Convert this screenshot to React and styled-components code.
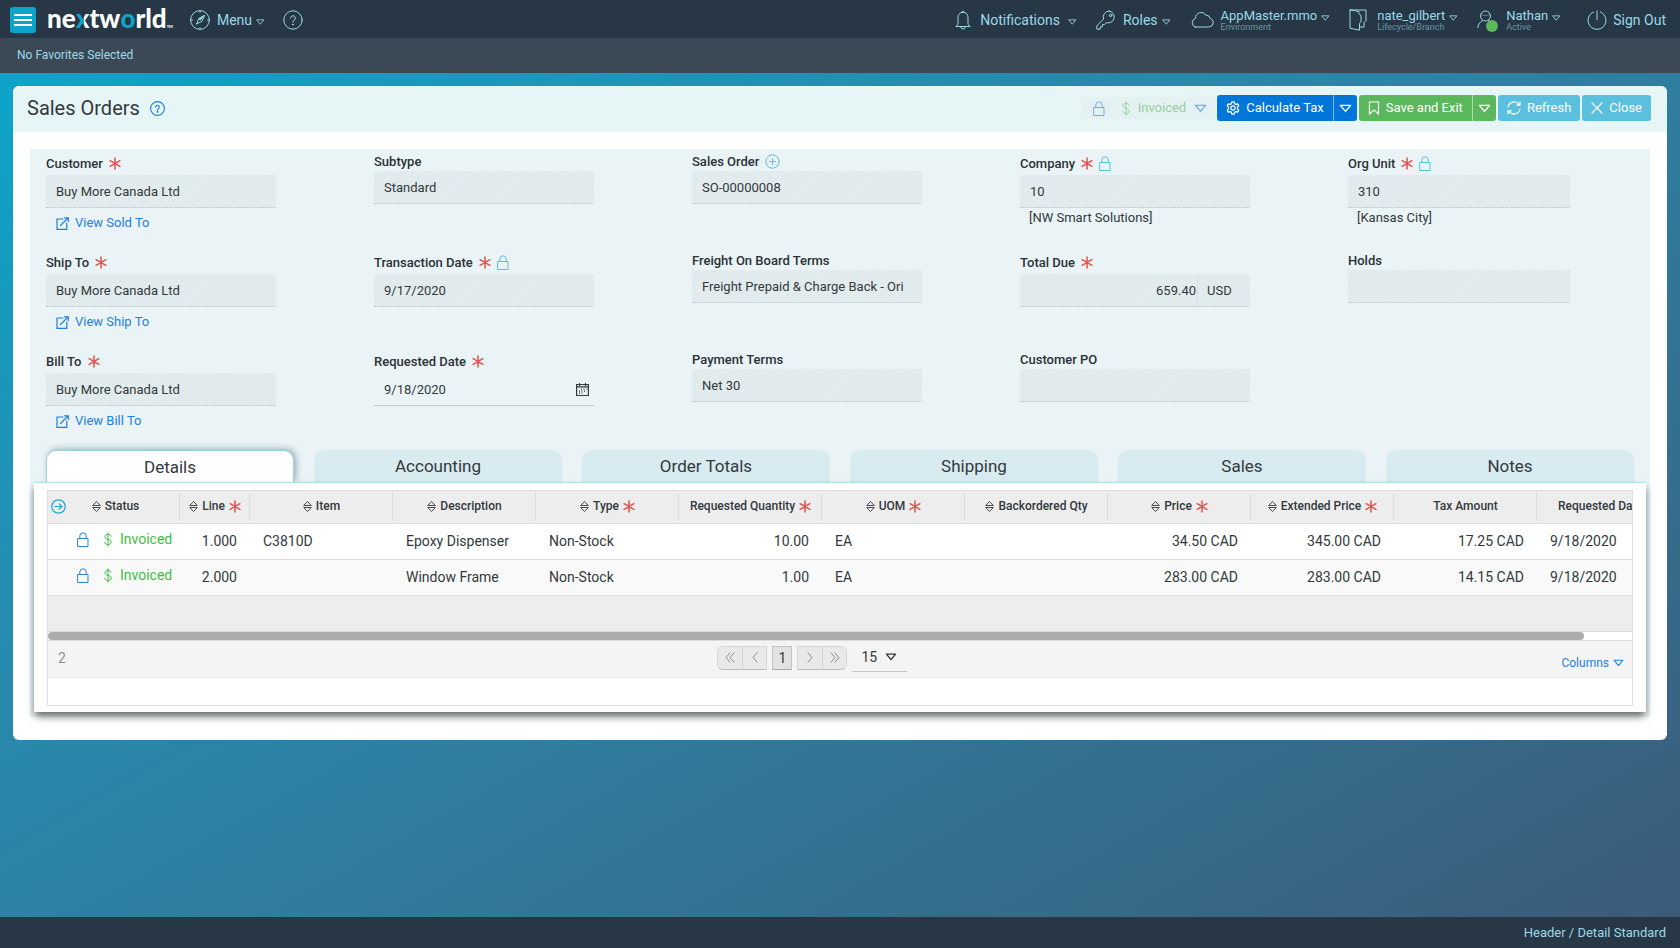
import React from "react";
import styled, { createGlobalStyle, css } from "styled-components";

const GlobalStyle = createGlobalStyle`
  * {
    box-sizing: border-box;
  }

  body {
    margin: 0;
    color: #33393d;
    font-family: Roboto, "Liberation Sans", sans-serif;
    font-size: 13px;
    line-height: 20px;
  }

  button,
  input,
  select {
    margin: 0;
    border: 0;
    border-radius: 0;
    padding: 0;
    background: none;
    color: inherit;
    font: inherit;
  }

  button {
    cursor: pointer;
  }

  a {
    color: inherit;
    text-decoration: none;
  }
`;

/* icons */

const Svg = styled.svg`
  display: block;
  flex: none;
  fill: none;
  stroke: currentColor;
  stroke-linecap: round;
  stroke-linejoin: round;
`;

const Icon = ({ w = 20, h = w, box = `0 0 ${w} ${h}`, stroke = 1, ...props }) => (
  <Svg width={w} height={h} viewBox={box} strokeWidth={stroke} aria-hidden="true" {...props} />
);

const Caret = ({ w = 9, stroke = 1 }) => (
  <Icon w={w} h={Math.round(w * 0.7)} box="0 0 10 7" stroke={stroke}>
    <path d="M1 1h8L5 5.8z" />
  </Icon>
);

const CompassIcon = () => (
  <Icon w={20}>
    <circle cx="10" cy="10" r="9.4" />
    <path d="M14.4 5.4L9 8.2l-2.6 6 5.2-2.8z" />
    <path d="M11 9.4l2.6-3.2L9.4 9z" fill="currentColor" />
    <path d="M10 .8v1.6M10 17.6v1.6M.8 10h1.6M17.6 10h1.6" />
  </Icon>
);

const HelpIcon = ({ w = 20, stroke = 1 }) => (
  <Icon w={w} box="0 0 20 20" stroke={stroke}>
    <circle cx="10" cy="10" r="9.2" />
    <path d="M7.6 8.1a2.4 2.4 0 1 1 3.6 2.1c-.8.4-1.2.8-1.2 1.7v.3" />
    <circle cx="10" cy="14.4" r=".5" fill="currentColor" />
  </Icon>
);

const BellIcon = () => (
  <Icon w={16} h={20}>
    <path d="M8 2.2C4.7 2.2 3 4.6 3 7.6v5.6c0 1.5-.8 2.4-2.2 3.3h14.4c-1.4-.9-2.2-1.8-2.2-3.3V7.6c0-3-1.7-5.4-5-5.4z" />
    <path d="M7 2.2a1 1 0 0 1 2 0M5.7 16.7a2.3 2.3 0 0 0 4.6 0" />
  </Icon>
);

const KeyIcon = () => (
  <Icon w={20} h={20}>
    <path d="M13.2 1a6 6 0 0 0-5.6 8.1L.8 15.9v3.3h3.4v-2.3h2.2v-2.3h2.2l1.7-2A6 6 0 1 0 13.2 1z" />
    <circle cx="14.6" cy="5.4" r="1.3" />
  </Icon>
);

const CloudIcon = () => (
  <Icon w={24} h={16}>
    <path d="M5.2 15h13.6a4.4 4.4 0 0 0 1.2-8.6 3.8 3.8 0 0 0-4-3.2A5.6 5.6 0 0 0 5.6 6.4 4.5 4.5 0 0 0 5.2 15z" />
  </Icon>
);

const MapIcon = () => (
  <Icon w={18} h={22}>
    <path d="M1 1h16v10.5l-2 2V18h-4M1 1v18.2l9.500 2V14.500l1.500-2V7L10 4.500V3z" />
  </Icon>
);

const UserIcon = () => (
  <Icon w={20} h={20}>
    <circle cx="8.5" cy="6" r="5" />
    <path d="M.8 17.6c.3-3.6 2.4-6 4.8-7M11.5 10.6c1.2.5 2 1 2.7 1.9" />
    <path d="M4.500 4.5c2 1.5 5 1.6 8 .3" strokeOpacity=".4" />
  </Icon>
);

const PowerIcon = () => (
  <Icon w={20} h={20}>
    <path d="M6.5 2a9 9 0 1 0 7 0M10 1v8.5" />
  </Icon>
);

const LockIcon = ({ w = 12, stroke = 1 }) => (
  <Icon w={w} h={w + 3} box="0 0 12 15" stroke={stroke}>
    <path d="M1 6.5h10v8H1zM2.800 6.5V4a3.200 3.200 0 0 1 6.400 0v2.500" strokeLinejoin="miter" />
  </Icon>
);

const DollarIcon = () => (
  <Icon w={8} h={15}>
    <path d="M4 .8v13.4M7.1 4.2C6.8 2.9 5.600 2.4 4 2.4S1 3.3 1 4.8s1.2 2.2 3 2.6 3.200 1.1 3.200 2.6S5.800 12.5 4 12.5.9 11.8.7 10.4" />
  </Icon>
);

const GearIcon = () => (
  <Icon w={14} box="0 0 16 16" stroke={1.4}>
    <path d="M6.7 1h2.6l.5 2 1.5.9 2-.6 1.3 2.3-1.500 1.400v2l1.500 1.400-1.300 2.300-2-.6-1.500.9-.5 2H6.700l-.5-2-1.500-.9-2 .6-1.300-2.300L2.900 9V7L1.400 5.600l1.300-2.300 2 .6L6.200 3z" />
    <circle cx="8" cy="8" r="2.4" />
  </Icon>
);

const BookmarkIcon = () => (
  <Icon w={12} h={14} stroke={1.2}>
    <path d="M1.5 1h9v12L6 9l-4.5 4z" strokeLinejoin="miter" />
  </Icon>
);

const RefreshIcon = () => (
  <Icon w={14} h={14} stroke={1.2}>
    <path d="M1 6A6.2 6.2 0 0 1 12.2 3.7M13 1v3.2H9.8M13 8A6.2 6.2 0 0 1 1.8 10.3M1 13V9.8h3.2" />
  </Icon>
);

const CloseIcon = () => (
  <Icon w={12} h={12} stroke={1.2}>
    <path d="M1 1l10 10M11 1L1 11" />
  </Icon>
);

const PlusIcon = () => (
  <Icon w={15} h={15}>
    <circle cx="7.5" cy="7.5" r="6.7" />
    <path d="M7.5 4.5v6M4.5 7.5h6" />
  </Icon>
);

const ArrowIcon = () => (
  <Icon w={15} h={15} stroke={1.2}>
    <circle cx="7.5" cy="7.5" r="6.7" />
    <path d="M4 7.5h7M8.3 4.8L11 7.5l-2.7 2.7" />
  </Icon>
);

const LinkIcon = () => (
  <Icon w={13} h={13} stroke={1.2}>
    <path d="M7 2H1v10.3h9.8V6M4.5 8.5L12 1M8.500.8h3.800v3.800" strokeLinejoin="miter" />
  </Icon>
);

const CalendarIcon = () => (
  <Icon w={13} h={13} stroke={1.2}>
    <path d="M.6 1.5h11.8v11H.6zM.6 3.8h11.8M3.5.4v2M9.5.4v2" strokeLinejoin="miter" />
    <path d="M5 6.200h5.500M3 8.200h7.500M3 10.200h5" strokeDasharray="1 1.5" strokeLinecap="butt" strokeWidth="1.3" />
  </Icon>
);

const SortIcon = () => (
  <Icon w={9} h={13} stroke={0.9}>
    <path d="M1 5.200L4.500 1.500 8 5.200zM1 7.800L4.500 11.500 8 7.800z" />
  </Icon>
);

const StarSvg = styled(Svg)`
  color: #e2504e;
`;

const Required = () => (
  <StarSvg width="12" height="13" viewBox="0 0 12 13" strokeWidth="1.5" role="img" aria-label="required">
    <path d="M6 .9v11.2M1.1 3.7l9.8 5.6M10.9 3.7L1.1 9.3" />
  </StarSvg>
);

/* page frame */

const Page = styled.div`
  display: flex;
  flex-direction: column;
  min-height: 100vh;
  background: linear-gradient(to bottom right, #0aa7cd 0%, #258db1 32%, #2e81a3 50%, #3c5a78 100%);
`;

const TopBar = styled.header`
  display: flex;
  align-items: center;
  height: 38px;
  padding: 2px 14px 0 10px;
  background: #273746;
  color: #9bd9e6;
  font-size: 14px;
`;

const Hamburger = styled.button`
  display: flex;
  flex-direction: column;
  justify-content: center;
  gap: 3px;
  width: 26px;
  height: 26px;
  padding: 0 4px;
  border-radius: 3px;
  background: #0ba5cb;
`;

const Bar = styled.span`
  height: 2px;
  background: #fff;
`;

const Logo = styled.a`
  display: flex;
  margin-left: 11px;
  padding-bottom: 3px;
  color: #fff;
  font-family: Lato, sans-serif;
  font-size: 26px;
  font-weight: 900;
  line-height: 33px;
`;

const LogoO = styled.span`
  color: #0ba5cb;
`;

const LogoX = styled.span`
  background: linear-gradient(90deg, #0ba5cb 55%, #fff 55%);
  background-clip: text;
  color: transparent;
`;

const Trade = styled.span`
  align-self: flex-end;
  font-size: 4px;
  line-height: 16px;
`;

const NavButton = styled.button`
  display: flex;
  align-items: center;
  gap: ${(p) => p.$gap || 7}px;
  margin-left: ${(p) => p.$left || 0}px;
`;

const NavLabel = styled.span`
  display: flex;
  align-items: center;
  gap: ${(p) => p.$gap || 4}px;

  svg {
    margin-top: 3px;
  }
`;

const Stack = styled.span`
  display: flex;
  flex-direction: column;
  align-items: flex-start;
  font-size: 13px;
  line-height: 14px;
`;

const SubLabel = styled.span`
  color: #6b95a5;
  font-size: 9px;
  line-height: 8px;
`;

const Account = styled.nav`
  display: flex;
  align-items: center;
  gap: 19px;
  margin-left: auto;
`;

const Presence = styled.span`
  position: relative;
`;

const OnlineDot = styled.span`
  position: absolute;
  right: -1px;
  bottom: -2px;
  width: 12px;
  height: 12px;
  border-radius: 50%;
  background: #5cb85c;
`;

const Favorites = styled.div`
  height: 35px;
  padding: 7px 17px;
  background: #3b4956;
  color: #9bd9e6;
  font-size: 12px;
`;

const Footer = styled.footer`
  margin-top: auto;
  height: 31px;
  padding: 6px 14px;
  background: #273746;
  color: #9bd9e6;
  text-align: right;
`;

const Card = styled.main`
  margin: 13px 13px 24px;
  padding-bottom: 23px;
  border-radius: 6px;
  background: #fff;
  overflow: hidden;
`;

const CardHeader = styled.div`
  display: flex;
  align-items: center;
  height: 46px;
  padding: 0 16px 2px 14px;
  background: #e6f5f6;
`;

const Title = styled.h1`
  margin: 0 10px 0 0;
  font-size: 20px;
  font-weight: 400;
  line-height: 28px;
`;

const HelpButton = styled.button`
  color: #1f7fe0;
`;

const hatch = css`
  background: repeating-linear-gradient(135deg, #e0e9eb 0 2px, #e4edee 2px 4px);
`;

const Actions = styled.div`
  display: flex;
  align-items: center;
  gap: 2px;
  margin-left: auto;
`;

const StatusButton = styled.button`
  display: flex;
  align-items: center;
  gap: 8px;
  height: 22px;
  padding: 0 8px 0 12px;
  color: #96cf9b;
  background: repeating-linear-gradient(135deg, #e2f0f1 0 2px, #e6f3f4 2px 4px);
`;

const Blue = styled.span`
  display: flex;
  color: ${(p) => (p.$soft ? "#75aeea" : "#2f83e0")};
`;

const StatusGroup = styled.span`
  display: flex;
  align-items: center;
  gap: 8px;
  margin-left: 9px;
`;

const tones = {
  primary: "#0275d8",
  success: "#5cb85c",
  info: "#5bc0de",
};

const ButtonGroup = styled.div`
  display: flex;
  border-radius: 3px;
  background: ${(p) => tones[p.$tone]};
  color: #fff;
`;

const ActionButton = styled.button`
  display: flex;
  align-items: center;
  gap: 6px;
  height: 26px;
  padding: 0 9px;
`;

const MoreButton = styled.button`
  display: flex;
  align-items: center;
  padding: 0 5px;
  border-left: 1px solid rgba(255, 255, 255, 0.5);
`;

/* form */

const Panel = styled.div`
  margin: 17px 17px 0;
  padding: 0 4px 5px;
  background: #eaf3f6;
`;

const Form = styled.form`
  display: grid;
  grid-template-columns:
    minmax(0, 328fr) minmax(0, 318fr) minmax(0, 328fr) minmax(0, 328fr)
    minmax(0, 298fr);
  grid-auto-rows: 99px;
  padding-left: 12px;
`;

const FieldBox = styled.div`
  padding-right: 98px;

  &:nth-child(5n) {
    padding-right: 76px;
  }
`;

const Label = styled.label`
  display: flex;
  align-items: center;
  gap: 6px;
  height: ${(p) => (p.$tall ? 26 : 22)}px;
  padding-top: 3px;
  color: #2b3236;
  font-weight: 500;
`;

const Mark = styled.span`
  display: flex;
  color: #5bc0de;
`;

const Control = styled.div`
  display: flex;
  align-items: center;
  height: 33px;
  ${(p) => (p.$editable ? "border-bottom: 1px solid #c4cbce;" : hatch)}
  ${(p) => !p.$editable && "border-bottom: 1px dotted #bcc4c6;"}
`;

const Input = styled.input`
  flex: 1;
  min-width: 0;
  height: 100%;
  padding: 0 ${(p) => (p.$right ? 1 : 10)}px 0 10px;
  text-align: ${(p) => (p.$right ? "right" : "left")};
  outline: none;
`;

const Currency = styled.span`
  width: 53px;
  padding-left: 9px;
  border-left: 1px solid #d5dee0;
  line-height: 31px;
`;

const DateButton = styled.button`
  padding: 0 5px;
`;

const FieldLink = styled.a`
  display: flex;
  align-items: center;
  gap: 6px;
  padding: 5px 10px;
  color: #1f7fe0;
`;

const Hint = styled.div`
  padding: 0 9px;
`;

const fields = [
  { id: "customer", label: "Customer", required: true, value: "Buy More Canada Ltd", link: "View Sold To" },
  { id: "subtype", label: "Subtype", value: "Standard" },
  { id: "sales-order", label: "Sales Order", mark: <PlusIcon />, value: "SO-00000008" },
  { id: "company", label: "Company", required: true, mark: <LockIcon />, value: "10", hint: "[NW Smart Solutions]" },
  { id: "org-unit", label: "Org Unit", required: true, mark: <LockIcon />, value: "310", hint: "[Kansas City]" },
  { id: "ship-to", label: "Ship To", required: true, value: "Buy More Canada Ltd", link: "View Ship To" },
  { id: "transaction-date", label: "Transaction Date", required: true, mark: <LockIcon />, value: "9/17/2020" },
  { id: "fob", label: "Freight On Board Terms", value: "Freight Prepaid & Charge Back - Ori" },
  { id: "total-due", label: "Total Due", required: true, value: "659.40", currency: "USD" },
  { id: "holds", label: "Holds", value: "" },
  { id: "bill-to", label: "Bill To", required: true, value: "Buy More Canada Ltd", link: "View Bill To" },
  { id: "requested-date", label: "Requested Date", required: true, value: "9/18/2020", editable: true },
  { id: "payment-terms", label: "Payment Terms", value: "Net 30" },
  { id: "customer-po", label: "Customer PO", value: "" },
];

const Field = ({ id, label, required, mark, value, link, hint, currency, editable }) => (
  <FieldBox>
    <Label htmlFor={id} $tall={required}>
      {label}
      {required && <Required />}
      {mark && <Mark>{mark}</Mark>}
    </Label>
    <Control $editable={editable}>
      <Input id={id} defaultValue={value} readOnly={!editable} $right={!!currency} />
      {currency && <Currency>{currency}</Currency>}
      {editable && (
        <DateButton type="button" aria-label="Pick a date">
          <CalendarIcon />
        </DateButton>
      )}
    </Control>
    {link && (
      <FieldLink href="#">
        <LinkIcon />
        {link}
      </FieldLink>
    )}
    {hint && <Hint>{hint}</Hint>}
  </FieldBox>
);

/* tabs and table */

const Tabs = styled.div`
  display: grid;
  grid-template-columns: repeat(6, 1fr);
  gap: 20px;
  padding: 4px 12px 0;
`;

const Tab = styled.button`
  height: 32px;
  border-radius: 10px 10px 0 0;
  background: #d8ebf1;
  font-size: 17px;

  &[aria-selected="true"] {
    border: 1px solid #9fd0de;
    border-bottom: 0;
    background: #fff;
    box-shadow: 2px -1px 6px rgba(60, 110, 125, 0.5);
  }
`;

const TabPanel = styled.section`
  position: relative;
  padding: 7px 13px 6px;
  border-top: 1px solid #b9dfea;
  background: #fff;
  box-shadow: 0 5px 8px -1px rgba(0, 0, 0, 0.6);
`;

const Grid = styled.div`
  padding-bottom: 27px;
  border: 1px solid #dcdfe0;
`;

const Scroller = styled.div`
  overflow-x: auto;
  scrollbar-width: none;
`;

const Table = styled.table`
  width: 1632px;
  border-collapse: collapse;
  table-layout: fixed;
  font-size: 14px;
`;

const Col = styled.col`
  width: ${(p) => p.$w}px;
`;

const Th = styled.th`
  height: 32px;
  padding: 0 0 1px;
  border-bottom: 1px solid #dcdcdc;
  background: linear-gradient(#dcdcdc, #dcdcdc) right 2px / 1px 28px no-repeat #ededed;
  font-size: 12px;
  font-weight: 500;
  white-space: nowrap;
`;

const ThInner = styled.div`
  display: flex;
  align-items: center;
  justify-content: center;
  gap: 4px;
`;

const StatusHead = styled.div`
  display: grid;
  grid-template-columns: 1fr auto 1fr;
  align-items: center;
  padding-left: 3px;
`;

const ExpandButton = styled.button`
  justify-self: start;
  color: #1fa9cf;
`;

const Tr = styled.tr`
  height: 36px;
  border-bottom: 1px solid #dcdcdc;
  background: ${(p) => (p.$alt ? "#f9f9f9" : "#fff")};
`;

const Td = styled.td`
  padding: 0 13px;
  text-align: ${(p) => (p.$right ? "right" : "left")};
`;

const StatusCell = styled.div`
  display: flex;
  align-items: center;
  gap: 8px;
  padding: 0 0 4px 16px;
  color: #3fbf3f;
`;

const Money = styled.span`
  display: flex;
  margin-left: 7px;
`;

const Blank = styled.div`
  height: 35px;
  background: #ededed;
`;

const Track = styled.div`
  height: 10px;
  border: solid #dcdcdc;
  border-width: 1px 0;
  background: #fff;
`;

const Thumb = styled.div`
  width: 97%;
  height: 8px;
  border-radius: 4px;
  background: #acacac;
`;

const Pager = styled.div`
  display: grid;
  grid-template-columns: 12fr auto 13fr;
  align-items: center;
  height: 37px;
  padding: 0 8px 2px;
  border-bottom: 1px solid #ececec;
  background: #f4f4f4;
  font-size: 14px;
`;

const Count = styled.span`
  padding-left: 2px;
  color: #8b8f91;
`;

const Pages = styled.div`
  display: flex;
  align-items: center;
  gap: 5px;
`;

const PagePair = styled.div`
  display: flex;
  overflow: hidden;
  border: 1px solid #d6d6d6;
  border-bottom-color: #bdbdbd;
  border-radius: ${(p) => (p.$end ? "0 6px 6px 0" : "6px 0 0 6px")};
`;

const PageButton = styled.button`
  display: grid;
  place-items: center;
  width: 24px;
  height: 22px;
  background: #e9e9e9;
  color: #8b8f91;

  & + & {
    border-left: 1px solid #d6d6d6;
  }
`;

const CurrentPage = styled.button`
  width: 20px;
  height: 24px;
  border: 1px solid #c2c2c2;
  border-bottom-color: #a8a8a8;
  background: #e2e2e2;
`;

const PageSize = styled.label`
  display: grid;
  align-items: center;
  width: 55px;
  height: 28px;
  border-bottom: 1px solid #c6c6c6;

  & > * {
    grid-area: 1 / 1;
  }

  & > svg {
    margin-left: 33px;
    pointer-events: none;
  }
`;

const Select = styled.select`
  width: 100%;
  padding-left: 9px;
  appearance: none;
  outline: none;
`;

const ColumnsButton = styled.button`
  display: flex;
  align-items: center;
  gap: 4px;
  justify-self: end;
  padding-top: 10px;
  color: #1f7fe0;
  font-size: 12px;
`;

const columns = [
  { name: "Line", sort: true, required: true, width: 70 },
  { name: "Item", sort: true },
  { name: "Description", sort: true },
  { name: "Type", sort: true, required: true },
  { name: "Requested Quantity", required: true },
  { name: "UOM", sort: true, required: true },
  { name: "Backordered Qty", sort: true },
  { name: "Price", sort: true, required: true },
  { name: "Extended Price", sort: true, required: true },
  { name: "Tax Amount" },
  { name: "Requested Date", required: true },
];

const rightAligned = ["Line", "Requested Quantity", "Backordered Qty", "Price", "Extended Price", "Tax Amount"];

const lines = [
  ["1.000", "C3810D", "Epoxy Dispenser", "Non-Stock", "10.00", "EA", "", "34.50 CAD", "345.00 CAD", "17.25 CAD", "9/18/2020"],
  ["2.000", "", "Window Frame", "Non-Stock", "1.00", "EA", "", "283.00 CAD", "283.00 CAD", "14.15 CAD", "9/18/2020"],
];

const tabs = ["Details", "Accounting", "Order Totals", "Shipping", "Sales", "Notes"];

const Chevrons = ({ d }) => (
  <Icon w={10} h={11}>
    <path d={d} />
  </Icon>
);

const LinesTable = () => (
  <Table>
    <colgroup>
      <Col $w={132} />
      {columns.map(({ name, width = 143 }) => (
        <Col key={name} $w={width} />
      ))}
    </colgroup>
    <thead>
      <tr>
        <Th scope="col">
          <StatusHead>
            <ExpandButton type="button" aria-label="Expand rows">
              <ArrowIcon />
            </ExpandButton>
            <ThInner>
              <SortIcon />
              Status
            </ThInner>
          </StatusHead>
        </Th>
        {columns.map(({ name, sort, required }) => (
          <Th key={name} scope="col">
            <ThInner>
              {sort && <SortIcon />}
              {name}
              {required && <Required />}
            </ThInner>
          </Th>
        ))}
      </tr>
    </thead>
    <tbody>
      {lines.map((line, row) => (
        <Tr key={line[0]} $alt={row % 2 === 1}>
          <Td>
            <StatusCell>
              <Blue>
                <LockIcon />
              </Blue>
              <Money>
                <DollarIcon />
              </Money>
              Invoiced
            </StatusCell>
          </Td>
          {line.map((cell, i) => (
            <Td key={columns[i].name} $right={rightAligned.includes(columns[i].name)}>
              {cell}
            </Td>
          ))}
        </Tr>
      ))}
    </tbody>
  </Table>
);

const Header = () => (
  <TopBar>
    <Hamburger aria-label="Open navigation">
      <Bar />
      <Bar />
      <Bar />
    </Hamburger>
    <Logo href="#" aria-label="nextworld">
      ne<LogoX>x</LogoX>tw<LogoO>o</LogoO>rld<Trade>TM</Trade>
    </Logo>
    <NavButton $left={17}>
      <CompassIcon />
      <NavLabel>
        Menu <Caret />
      </NavLabel>
    </NavButton>
    <NavButton $left={18} aria-label="Help">
      <HelpIcon />
    </NavButton>
    <Account>
      <NavButton $gap={9}>
        <BellIcon />
        <NavLabel $gap={8}>
          Notifications <Caret />
        </NavLabel>
      </NavButton>
      <NavButton>
        <KeyIcon />
        <NavLabel>
          Roles <Caret />
        </NavLabel>
      </NavButton>
      <NavButton>
        <CloudIcon />
        <Stack>
          <NavLabel>
            AppMaster.mmo <Caret />
          </NavLabel>
          <SubLabel>Environment</SubLabel>
        </Stack>
      </NavButton>
      <NavButton $gap={10}>
        <MapIcon />
        <Stack>
          <NavLabel>
            nate_gilbert <Caret />
          </NavLabel>
          <SubLabel>Lifecycle/Branch</SubLabel>
        </Stack>
      </NavButton>
      <NavButton $gap={9}>
        <Presence>
          <UserIcon />
          <OnlineDot />
        </Presence>
        <Stack>
          <NavLabel>
            Nathan <Caret />
          </NavLabel>
          <SubLabel>Active</SubLabel>
        </Stack>
      </NavButton>
      <NavButton $left={7} $gap={6}>
        <PowerIcon />
        Sign Out
      </NavButton>
    </Account>
  </TopBar>
);

const App = () => (
  <Page>
    <GlobalStyle />
    <Header />
    <Favorites>No Favorites Selected</Favorites>
    <Card>
      <CardHeader>
        <Title>Sales Orders</Title>
        <HelpButton aria-label="About sales orders">
          <HelpIcon w={15} stroke={1.5} />
        </HelpButton>
        <Actions>
          <StatusButton>
            <Blue $soft>
              <LockIcon />
            </Blue>
            <StatusGroup>
              <DollarIcon />
              Invoiced
            </StatusGroup>
            <Blue $soft>
              <Caret w={13} />
            </Blue>
          </StatusButton>
          <ButtonGroup $tone="primary">
            <ActionButton>
              <GearIcon /> Calculate Tax
            </ActionButton>
            <MoreButton aria-label="More tax actions">
              <Caret w={13} />
            </MoreButton>
          </ButtonGroup>
          <ButtonGroup $tone="success">
            <ActionButton>
              <BookmarkIcon /> Save and Exit
            </ActionButton>
            <MoreButton aria-label="More save actions">
              <Caret w={13} />
            </MoreButton>
          </ButtonGroup>
          <ButtonGroup $tone="info">
            <ActionButton>
              <RefreshIcon /> Refresh
            </ActionButton>
          </ButtonGroup>
          <ButtonGroup $tone="info">
            <ActionButton>
              <CloseIcon /> Close
            </ActionButton>
          </ButtonGroup>
        </Actions>
      </CardHeader>
      <Panel>
        <Form>
          {fields.map((field) => (
            <Field key={field.id} {...field} />
          ))}
        </Form>
        <Tabs role="tablist">
          {tabs.map((tab, i) => (
            <Tab key={tab} type="button" role="tab" aria-selected={i === 0}>
              {tab}
            </Tab>
          ))}
        </Tabs>
        <TabPanel role="tabpanel" aria-label="Details">
          <Grid>
            <Scroller>
              <LinesTable />
            </Scroller>
            <Blank />
            <Track>
              <Thumb />
            </Track>
            <Pager>
              <Count>2</Count>
              <Pages>
                <PagePair>
                  <PageButton aria-label="First page">
                    <Chevrons d="M5 .8L1 5.5l4 4.7M9 .8L5 5.5l4 4.7" />
                  </PageButton>
                  <PageButton aria-label="Previous page">
                    <Chevrons d="M7 .8L3 5.5l4 4.7" />
                  </PageButton>
                </PagePair>
                <CurrentPage aria-current="page">1</CurrentPage>
                <PagePair $end>
                  <PageButton aria-label="Next page">
                    <Chevrons d="M3 .8l4 4.7-4 4.7" />
                  </PageButton>
                  <PageButton aria-label="Last page">
                    <Chevrons d="M1 .8l4 4.7-4 4.7M5 .8l4 4.7-4 4.7" />
                  </PageButton>
                </PagePair>
                <PageSize>
                  <Select aria-label="Rows per page" defaultValue="15">
                    <option>15</option>
                    <option>25</option>
                    <option>50</option>
                  </Select>
                  <Caret w={12} stroke={1.2} />
                </PageSize>
              </Pages>
              <ColumnsButton>
                Columns <Caret w={11} />
              </ColumnsButton>
            </Pager>
          </Grid>
        </TabPanel>
      </Panel>
    </Card>
    <Footer>Header / Detail Standard</Footer>
  </Page>
);

export default App;
